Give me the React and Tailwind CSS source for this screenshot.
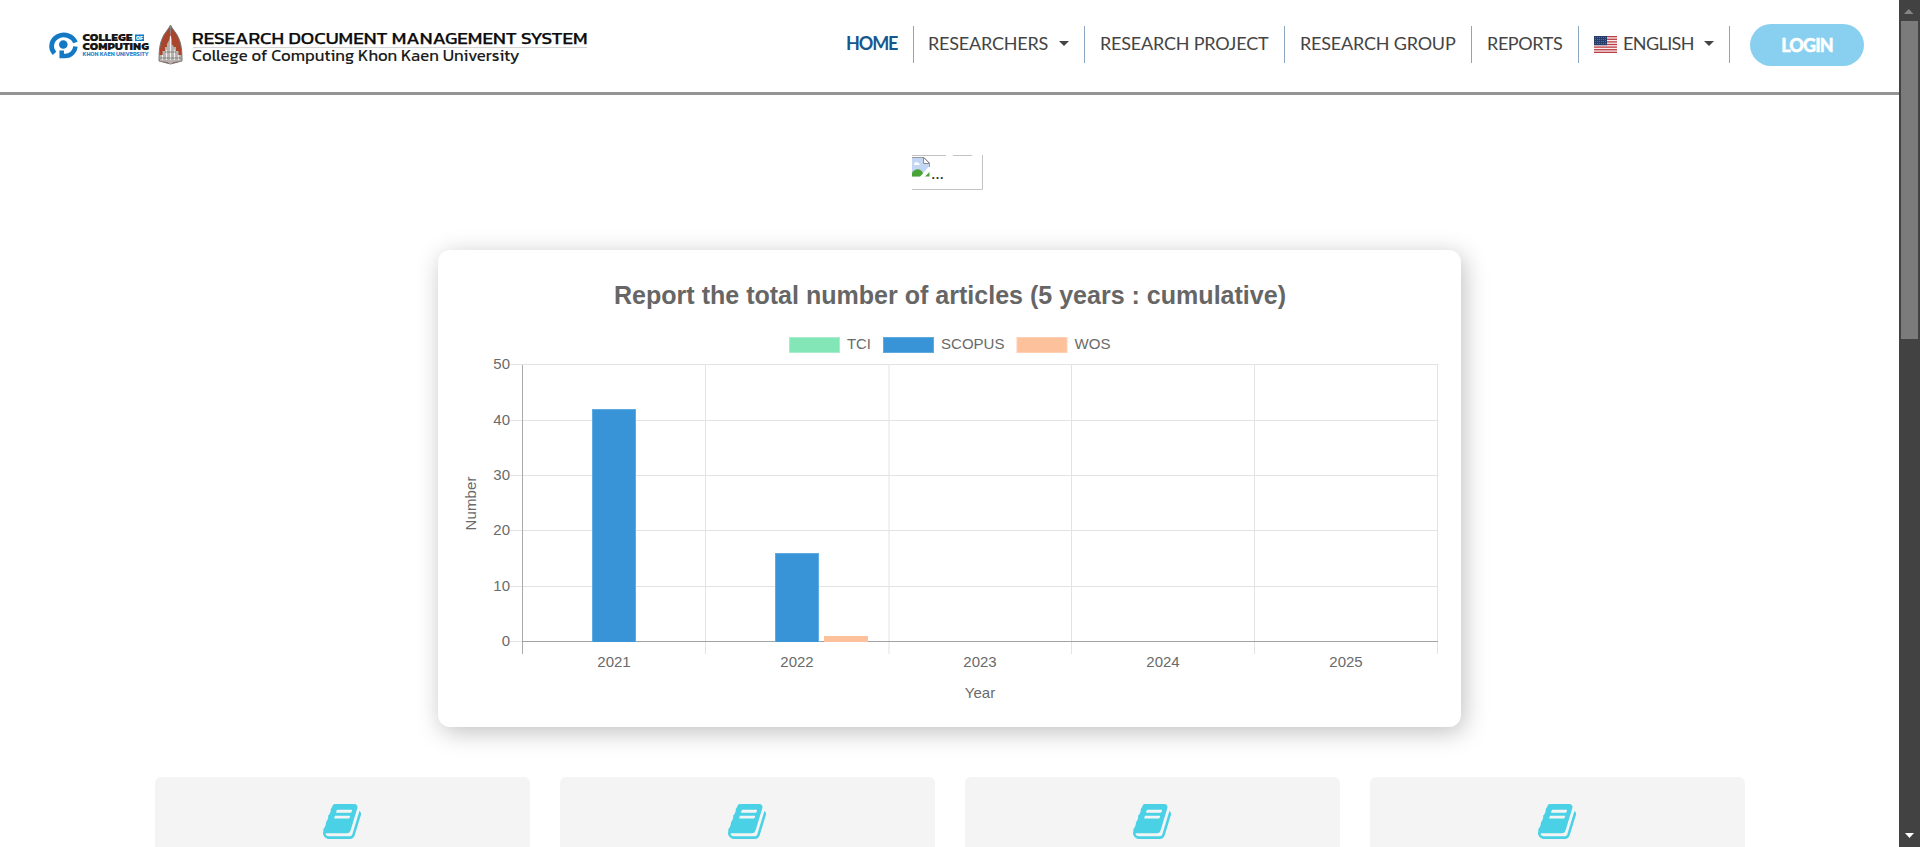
import React from "react";

const Caret = () => (
  <span className="-mt-[3px] h-0 w-0 border-x-[5px] border-t-[5px] border-x-transparent border-t-[#444444]" />
);

const Flag = () => (
  <svg width="23" height="17" viewBox="0 0 23 17" className="mr-1.5 shrink-0">
    <rect width="23" height="17" fill="#f6eff0" />
    {[0, 1, 2, 3, 4, 5, 6].map((i) => (
      <rect key={i} y={i * 2.615} width="23" height="1.31" fill="#bd3d44" />
    ))}
    <rect width="13" height="9.2" fill="#263c6b" />
    {[1, 3, 5, 7].map((y) =>
      [1, 3, 5, 7, 9, 11].map((x) => (
        <rect key={x + "-" + y} x={x} y={y} width="0.8" height="0.8" fill="#7d8bab" />
      ))
    )}
  </svg>
);

function NavItem({ className, children }) {
  return (
    <li className={"flex h-[37px] items-center border-r border-[#8aa5c0] pl-[15px] whitespace-nowrap " + className}>
      {children}
    </li>
  );
}

function Logo() {
  return (
    <svg width="545" height="48" viewBox="46 20 545 48" fontFamily="Kanit, 'Noto Sans', sans-serif">
      <path d="M75.400 42.500A12.200 11.200 0 1 0 54.500 53.300" fill="none" stroke="#1479c4" strokeWidth="4.800" />
      <path d="M61.700 50.500V56H65C71 56 75 51.500 75.500 46.500" fill="none" stroke="#1479c4" strokeWidth="4.500" />
      <circle cx="63.300" cy="44.500" r="4.300" fill="#1479c4" />
      <text x="82.500" y="41.300" fontSize="9.800" fontWeight="800" fill="#171717" textLength="50" lengthAdjust="spacingAndGlyphs">COLLEGE</text>
      <rect x="135" y="34.500" width="9" height="6.500" fill="#1479c4" />
      <text x="136" y="40.200" fontSize="6" fontWeight="700" fill="#fff" textLength="7" lengthAdjust="spacingAndGlyphs">OF</text>
      <text x="82.500" y="50.300" fontSize="9.800" fontWeight="800" fill="#171717" textLength="66.500" lengthAdjust="spacingAndGlyphs">COMPUTING</text>
      <text x="82.500" y="56.300" fontSize="5.400" fontWeight="600" fill="#2785cc" textLength="66" lengthAdjust="spacingAndGlyphs">KHON KAEN UNIVERSITY</text>

      <path d="M170.500 25C172 29 177 33 179 39C181 44 182 49 182 61L170.500 64L159 61C159 49 160 44 162 39C164 33 169 29 170.500 25Z" fill="#a9452d" stroke="#777" strokeWidth="1" />
      <path d="M170.500 34L171.800 40V44L174 47H176V51H178.500V55H181.500V61L174 62L170.500 64L167 62L159.500 61V55H162.500V51H165V47H167V44L169.200 40Z" fill="#b5b1ae" />
      <path d="M170.500 36V60M166.500 50V60M174.500 50V60M162.500 55V60M178.500 55V60" stroke="#f2efec" strokeWidth="1.100" />
      <path d="M160 58H181M165 52H176" stroke="#777472" strokeWidth=".8" />
      <path d="M170.500 26V34" stroke="#8c8480" strokeWidth="1" />

      <text x="192" y="44" fontSize="17" fontWeight="400" fill="#0c0c0c" stroke="#0c0c0c" strokeWidth=".25" textLength="395.500" lengthAdjust="spacingAndGlyphs">RESEARCH DOCUMENT MANAGEMENT SYSTEM</text>
      <rect x="193" y="47" width="394" height="1" fill="#d4d4d4" />
      <text x="192" y="61" fontSize="15.800" fill="#1d1d1d" textLength="327.500" lengthAdjust="spacingAndGlyphs">College of Computing Khon Kaen University</text>
    </svg>
  );
}

const xs = [522.5, 705.5, 889, 1071.5, 1254.5, 1437.5];
const ys = [364.5, 420.5, 475.5, 530.5, 586.5, 641.5];

function Chart() {
  return (
    <svg width="1023" height="477" viewBox="438 250 1023 477" fontFamily="'Liberation Sans', Arial, sans-serif" fontSize="15" fill="#6a6a6a">
      <text x="614" y="304" fontSize="25" fontWeight="700" fill="#666" textLength="672" lengthAdjust="spacingAndGlyphs">
        Report the total number of articles (5 years : cumulative)
      </text>
      <rect x="789.500" y="337.500" width="50" height="15" fill="#83e6b6" stroke="#a9eecc" />
      <text x="847" y="349" textLength="24" lengthAdjust="spacingAndGlyphs">TCI</text>
      <rect x="883.500" y="337.500" width="50" height="15" fill="#3894d6" stroke="#5eabe0" />
      <text x="941" y="349" textLength="63.500" lengthAdjust="spacingAndGlyphs">SCOPUS</text>
      <rect x="1017" y="337.500" width="50" height="15" fill="#fdc29b" stroke="#fdd0b2" />
      <text x="1074.500" y="349" textLength="36" lengthAdjust="spacingAndGlyphs">WOS</text>
      {ys.map((y, i) => (
        <g key={y}>
          <path d={`M510 ${y}H1438`} stroke="#e3e3e3" />
          <text x="510" y={y + 4.5} textAnchor="end">{50 - i * 10}</text>
        </g>
      ))}
      {xs.map((x) => (
        <path key={x} d={`M${x} 364V654`} stroke="#e3e3e3" />
      ))}
      <path d="M522.500 365V654" stroke="#a9a9a9" />
      <path d="M522 641.500H1438" stroke="#a3a3a3" />
      <rect x="592" y="409" width="44" height="233" fill="#5dabe0" />
      <rect x="593" y="410" width="42" height="232" fill="#3894d6" />
      <rect x="775" y="553" width="44" height="89" fill="#5dabe0" />
      <rect x="776" y="554" width="42" height="88" fill="#3894d6" />
      <rect x="824" y="636" width="44" height="6" fill="#fdc29b" />
      {[2021, 2022, 2023, 2024, 2025].map((year, i) => (
        <text key={year} x={614 + i * 183} y="667" textAnchor="middle">{year}</text>
      ))}
      <text x="980" y="698" textAnchor="middle">Year</text>
      <text transform="translate(476 503.500) rotate(-90)" textAnchor="middle" textLength="54">Number</text>
    </svg>
  );
}

const Book = () => (
  <svg width="41" height="41" viewBox="0 0 1792 1792" fill="#4ad1e5">
    <path d="M1639 478q40 57 18 129l-275 906q-19 64-76.500 107.500t-122.500 43.500h-923q-77 0-148.500-53.500t-99.500-131.500q-24-67-2-127 0-4 3-27t4-37q1-8-3-21.500t-3-19.500q2-11 8-21t16.500-23.500 16.500-23.500q23-38 45-91.500t30-91.500q3-10 .5-30t-.5-28q3-11 17-28t17-23q21-36 42-92t25-90q1-9-2.500-32t.5-28q4-13 22-30.500t22-22.500q19-26 42.500-84.500t27.500-96.500q1-8-3-25.500t-2-26.500q2-8 9-18t18-23 17-21q8-12 16.500-30.500t15-35 16-36 19.500-32 26.500-23.500 36-11.500 47.500 5.500l-1 3q38-9 51-9h761q74 0 114 56t18 130l-274 906q-36 119-71.500 153.500t-128.500 34.500h-869q-27 0-38 15-11 16-1 43 24 70 144 70h923q29 0 56-15.500t35-41.500l300-987q7-22 5-57 38 15 59 43zm-1064 2q-4 13 2 22.500t20 9.500h608q13 0 25.500-9.500t16.500-22.500l21-64q4-13-2-22.500t-20-9.500h-608q-13 0-25.500 9.500t-16.500 22.500zm-83 256q-4 13 2 22.500t20 9.500h608q13 0 25.500-9.500t16.500-22.500l21-64q4-13-2-22.500t-20-9.500h-608q-13 0-25.500 9.500t-16.500 22.500z" />
  </svg>
);

const BrokenImage = () => (
  <svg width="71" height="36" viewBox="0 0 71 36">
    <path d="M0 .5H34M41 .5H60M70.500 0V34.500H0" fill="none" stroke="#c3c3c3" />
    <path d="M0 2.500H12L17.500 8V11L8 21.500H0Z" fill="#c3d7f5" />
    <path d="M0 21.500V18C3 13 9 13 11 18.500L8 21.500Z" fill="#4aa336" />
    <path d="M13 21.500L17.500 17V21.500Z" fill="#4aa336" />
    <path d="M2 9.500C2 7 5 6 6 8C8 8 8 10 7 10H2Z" fill="#fff" />
    <path d="M0 2.500H12L17.500 8V12" fill="none" stroke="#9a9a9a" />
    <path d="M11.500 2.500V8.500H17.500Z" fill="#fff" stroke="#8d8d8d" />
    <text x="19" y="24" fontFamily="'Open Sans', sans-serif" fontSize="17" fill="#222" textLength="13">...</text>
  </svg>
);

export default function App() {
  return (
    <div className="flex h-[847px] w-full overflow-hidden bg-white font-[Lato,sans-serif]">
      <div className="flex min-w-0 flex-1 flex-col">
        <header className="flex h-[95px] shrink-0 items-start border-b-[3px] border-[#949494] pl-[46px]">
          <div className="mt-5 w-[785px]">
            <Logo />
          </div>
          <ul className="mt-[26px] flex text-[18px] tracking-[-0.2px] text-[#444444]">
            <NavItem className="w-[83px] font-bold tracking-[-1.1px] text-[#16588e]">
              <span className="-mt-0.5">HOME</span>
            </NavItem>
            <NavItem className="w-[171px]">
              <span className="-mt-0.5 -ml-px w-[131px]">RESEARCHERS</span>
              <Caret />
            </NavItem>
            <NavItem className="w-[200px]">
              <span className="-mt-0.5">RESEARCH PROJECT</span>
            </NavItem>
            <NavItem className="w-[187px]">
              <span className="-mt-0.5">RESEARCH GROUP</span>
            </NavItem>
            <NavItem className="w-[107px]">
              <span className="-mt-0.5 tracking-[-0.4px]">REPORTS</span>
            </NavItem>
            <NavItem className="w-[151px]">
              <Flag />
              <span className="-mt-0.5 w-[81px] tracking-[-0.6px]">ENGLISH</span>
              <Caret />
            </NavItem>
          </ul>
          <button className="mt-6 ml-5 h-[42px] w-[114px] rounded-full bg-[#89cff0] text-[18px] font-black tracking-[-0.9px] text-white [-webkit-text-stroke:0.4px_white]">
            LOGIN
          </button>
        </header>
        <main className="flex flex-1 flex-col">
          <div className="mt-[60px] ml-[912px] h-9">
            <BrokenImage />
          </div>
          <section className="mt-[59px] ml-[438px] h-[477px] w-[1023px] shrink-0 rounded-xl bg-white shadow-[3px_5px_24px_rgba(0,0,0,0.25)]">
            <Chart />
          </section>
          <div className="mt-[50px] ml-[155px] grid w-[1590px] shrink-0 grid-cols-4 gap-[30px]">
            {[0, 1, 2, 3].map((i) => (
              <div key={i} className="flex h-[200px] justify-center rounded-md bg-[#f4f4f4] pt-6 pl-0.5">
                <Book />
              </div>
            ))}
          </div>
        </main>
      </div>
      <aside className="flex w-[21px] shrink-0 flex-col items-center bg-[#424242]">
        <svg width="21" height="21">
          <path d="M5 14H14.500L9.700 9Z" fill="#858585" />
        </svg>
        <div className="h-[318px] w-[17px] bg-[#7b7b7b]" />
        <svg width="21" height="21" className="mt-auto">
          <path d="M6 7H15L10.500 12Z" fill="#fff" />
        </svg>
      </aside>
    </div>
  );
}
